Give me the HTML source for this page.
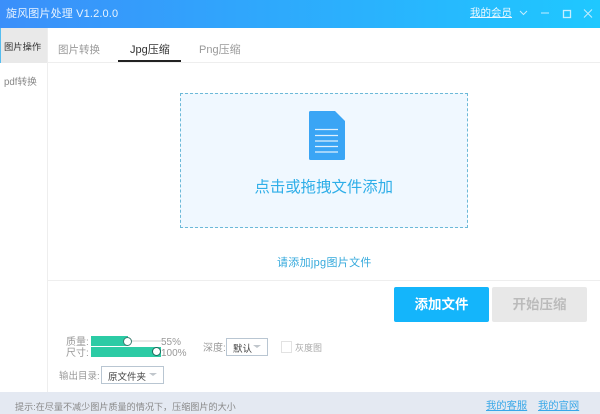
<!DOCTYPE html>
<html>
<head>
<meta charset="utf-8">
<style>
html,body{margin:0;padding:0;width:600px;height:414px;overflow:hidden;background:#fff;}
body{position:relative;font-family:"Liberation Sans","Noto Sans CJK SC",sans-serif;}
.a{position:absolute;white-space:nowrap;}
.t{line-height:14px;}
</style>
</head>
<body>
<div class="a" style="left:0;top:0;width:600px;height:28px;background:linear-gradient(90deg,#3b8ffa,#1fc8ff);"></div>
<div class="a t" style="left:6px;top:7px;font-size:11px;color:#e8f4ff;letter-spacing:0.15px;">旋风图片处理 V1.2.0.0</div>
<div class="a t" style="left:470px;top:6px;font-size:10.500px;color:#e8f8ff;text-decoration:underline;">我的会员</div>
<svg class="a" style="left:515px;top:5px;" width="85" height="18" viewBox="0 0 85 18" fill="none" stroke="#c5eeff" stroke-width="1">
<path d="M5 6l3.500 3.500L12 6"/>
<path d="M26 8h8"/>
<rect x="48.500" y="5.500" width="7" height="7" stroke-width="1.300"/>
<path d="M69 4.500l8 8M77 4.500l-8 8"/>
</svg>

<div class="a" style="left:47px;top:28px;width:1px;height:364px;background:#eeeeee;"></div>
<div class="a" style="left:0;top:28px;width:47px;height:35px;background:#e9e9e9;"></div>
<div class="a" style="left:0;top:28px;width:1px;height:35px;background:#55bdf0;"></div>
<div class="a t" style="left:4px;top:40px;font-size:9.300px;color:#333;">图片操作</div>
<div class="a t" style="left:4px;top:76px;font-size:9.700px;color:#888;">pdf转换</div>

<div class="a" style="left:48px;top:62px;width:552px;height:1px;background:#eeeeee;"></div>
<div class="a t" style="left:58px;top:43px;font-size:10.500px;color:#999;">图片转换</div>
<div class="a t" style="left:130px;top:43px;font-size:11px;color:#333;">Jpg压缩</div>
<div class="a t" style="left:199px;top:43px;font-size:11px;color:#999;">Png压缩</div>
<div class="a" style="left:118px;top:60px;width:63px;height:2px;background:#222;"></div>

<div class="a" style="left:180px;top:93px;width:286px;height:133px;background:#f0f8ff;border:1px dashed #6cb9d8;"></div>
<svg class="a" style="left:308px;top:110px;" width="38" height="52" viewBox="0 0 38 52">
<path d="M1 2.500Q1 1 2.500 1H27L37 11V48.500Q37 50 35.500 50H2.500Q1 50 1 48.500Z" fill="#3aa5f5"/>
<path d="M7 19.500H30M7 25.500H30M7 31H30M7 36.500H30M7 42H30" stroke="#dff0fd" stroke-width="1.300" fill="none"/>
</svg>
<div class="a" style="left:254.500px;top:178px;font-size:15.400px;line-height:20px;color:#2eaee8;">点击或拖拽文件添加</div>
<div class="a t" style="left:277px;top:256px;font-size:11px;letter-spacing:0.300px;color:#35a9dc;">请添加jpg图片文件</div>

<div class="a" style="left:48px;top:280px;width:552px;height:1px;background:#eeeeee;"></div>
<div class="a" style="left:394px;top:287px;width:95px;height:35px;background:#14b5fb;border-radius:2px;color:#fff;font-size:13.500px;font-weight:bold;line-height:36px;text-align:center;">添加文件</div>
<div class="a" style="left:492px;top:287px;width:95px;height:35px;background:#e8e8e8;border-radius:2px;color:#bbb;font-size:13.500px;font-weight:bold;line-height:36px;text-align:center;">开始压缩</div>

<div class="a t" style="left:66px;top:336px;font-size:10px;color:#999;">质量:</div>
<div class="a t" style="left:66px;top:347px;font-size:10px;color:#999;">尺寸:</div>
<div class="a" style="left:91px;top:340px;width:70px;height:2px;background:#e8e8e8;"></div>
<div class="a" style="left:91px;top:336px;width:37px;height:10px;background:#2ccba5;"></div>
<div class="a" style="left:91px;top:347px;width:70px;height:10px;background:#2ccba5;"></div>
<div class="a" style="left:123px;top:337px;width:7px;height:7px;border-radius:50%;background:#fff;border:1px solid #3b7d70;"></div>
<div class="a" style="left:152px;top:347px;width:7px;height:7px;border-radius:50%;background:#fff;border:1px solid #1c6b5c;"></div>
<div class="a t" style="left:161px;top:336px;font-size:10px;color:#999;">55%</div>
<div class="a t" style="left:161px;top:347px;font-size:10px;color:#999;">100%</div>

<div class="a t" style="left:203px;top:342px;font-size:10px;color:#999;">深度:</div>
<div class="a" style="left:226px;top:338px;width:40px;height:16px;border:1px solid #b9c6d2;"></div>
<div class="a t" style="left:233px;top:343px;font-size:9.500px;color:#444;">默认</div>
<div class="a" style="left:253px;top:345px;width:0;height:0;border-left:4.500px solid transparent;border-right:4.500px solid transparent;border-top:3px solid #c0c6cc;"></div>
<div class="a" style="left:281px;top:341px;width:9px;height:10px;border:1px solid #e2e2e2;"></div>
<div class="a t" style="left:295px;top:341px;font-size:9px;color:#aaa;">灰度图</div>

<div class="a t" style="left:59px;top:370px;font-size:9.500px;color:#999;">输出目录:</div>
<div class="a" style="left:101px;top:366px;width:61px;height:16px;border:1px solid #b9c6d2;"></div>
<div class="a t" style="left:108px;top:371px;font-size:9.500px;color:#444;">原文件夹</div>
<div class="a" style="left:149px;top:373px;width:0;height:0;border-left:4px solid transparent;border-right:4px solid transparent;border-top:3px solid #c0c6cc;"></div>

<div class="a" style="left:0;top:392px;width:600px;height:22px;background:#e4e9f2;"></div>
<div class="a t" style="left:15px;top:400px;font-size:9.100px;color:#888;">提示:在尽量不减少图片质量的情况下，压缩图片的大小</div>
<div class="a t" style="left:486px;top:400px;font-size:10.300px;color:#3aa8e8;text-decoration:underline;">我的客服</div>
<div class="a t" style="left:538px;top:400px;font-size:10.300px;color:#3aa8e8;text-decoration:underline;">我的官网</div>
</body>
</html>
